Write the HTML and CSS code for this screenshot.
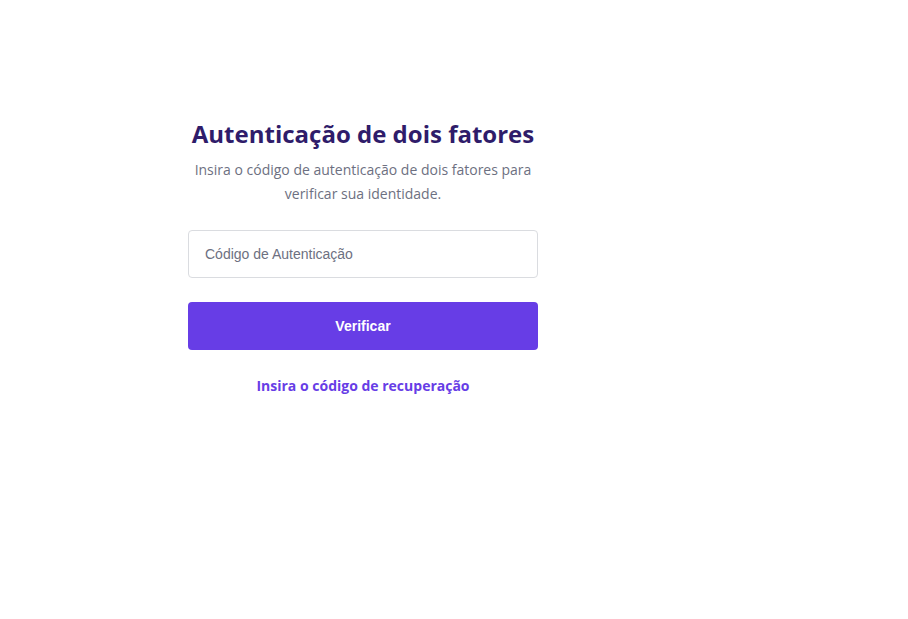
FILE: index.html
```html
<!DOCTYPE html>
<html lang="pt">
<head>
<meta charset="utf-8">
<link rel="stylesheet" href="styles.css">
</head>
<body>
<main class="page">
  <section class="card">
    <h1 class="title">Autenticação de dois fatores</h1>
    <p class="subtitle">Insira o código de autenticação de dois fatores para verificar sua identidade.</p>
    <form class="form">
      <input class="input" type="text" placeholder="Código de Autenticação">
      <button class="btn" type="button">Verificar</button>
    </form>
    <a class="link" href="#">Insira o código de recuperação</a>
  </section>
</main>
</body>
</html>
```
FILE: styles.css
```css
html, body {
  margin: 0;
  padding: 0;
  background: #fff;
}
.page {
  padding: 118px 0 0 188px;
}
.card {
  width: 350px;
  display: flex;
  flex-direction: column;
  align-items: center;
  font-family: "Open Sans", sans-serif;
}
.title {
  margin: 0;
  font-size: 24px;
  line-height: 32px;
  font-weight: 700;
  color: #2f1c6a;
  white-space: nowrap;
}
.subtitle {
  margin: 8px 0 0;
  font-size: 14px;
  line-height: 24px;
  color: #6d7081;
  text-align: center;
}
.form {
  width: 100%;
  margin-top: 24px;
  display: flex;
  flex-direction: column;
  gap: 24px;
}
.input {
  box-sizing: border-box;
  width: 100%;
  height: 48px;
  margin: 0;
  padding: 0 16px;
  border: 1px solid #dadce0;
  border-radius: 4px;
  font-family: "Liberation Sans", Arial, sans-serif;
  font-size: 14px;
  color: #36344d;
  outline: none;
}
.input::placeholder {
  color: #6d7081;
  opacity: 1;
}
.btn {
  width: 100%;
  height: 48px;
  margin: 0;
  border: 0;
  border-radius: 4px;
  background: #673de6;
  color: #fff;
  font-family: "Liberation Sans", Arial, sans-serif;
  font-size: 14px;
  font-weight: 700;
  cursor: pointer;
}
.link {
  margin-top: 24px;
  font-size: 14px;
  line-height: 24px;
  font-weight: 700;
  color: #673de6;
  text-decoration: none;
}
```
